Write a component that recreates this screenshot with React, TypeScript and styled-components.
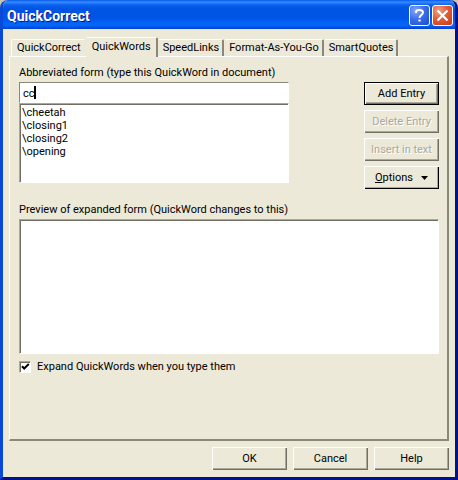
import React, { useState } from 'react';
import styled, { createGlobalStyle, css } from 'styled-components';

const face = '#ece9d8';
const shadow = '#8b887a';
const dark = '#716f64';

const GlobalStyle = createGlobalStyle`
  * { box-sizing: border-box; }
  body { margin: 0; background: #c9c4b0; }
  body, button, input, select, textarea {
    font-family: Roboto, "Liberation Sans", Arial, sans-serif;
    font-size: 11px;
    line-height: 13px;
    color: #000;
  }
`;

const Dialog = styled.div`
  display: flex;
  flex-direction: column;
  min-height: 100vh;
  background: ${face};
  border: solid;
  border-width: 0 3px 3px;
  border-color: #0a48d8 #00138c #00138c #0a48d8;
  border-radius: 8px 8px 0 0;
  overflow: hidden;
`;

const TitleBar = styled.header`
  display: flex;
  align-items: center;
  gap: 2px;
  height: 29px;
  margin-left: -3px;
  margin-right: -3px;
  padding: 2px 5px 0 7px;
  background: linear-gradient(#0058e6 0, #3a8bff 2px, #0860ee 5px, #0054e3 9px, #0055e5 18px, #0366fb 24px, #0262f2 26px, #003dd0 29px);
`;

const Title = styled.h1`
  flex: 1;
  margin: 0;
  font-family: Roboto, "Liberation Sans", sans-serif;
  font-size: 14px;
  line-height: 18px;
  font-weight: 700;
  color: #fff;
  text-shadow: 1px 1px 0 #0a1883;
`;

const CaptionButton = styled.button<{ $close?: boolean }>`
  display: flex;
  align-items: center;
  justify-content: center;
  width: 21px;
  height: 21px;
  padding: 0;
  border: 1px solid #fff;
  border-radius: 3px;
  background: ${(p) =>
    p.$close
      ? 'radial-gradient(circle at 30% 25%, #f0a083 0, #e25c38 45%, #c63a14 100%)'
      : 'radial-gradient(circle at 30% 25%, #88a8f5 0, #3c6ee8 45%, #1c4bd0 100%)'};
`;

const Body = styled.main`
  flex: 1;
  display: flex;
  flex-direction: column;
  padding: 7px 6px 7px;
`;

const TabList = styled.div`
  display: flex;
  align-items: flex-end;
  height: 20px;
  padding-left: 2px;
`;

const Tab = styled.button<{ $active: boolean }>`
  height: 17px;
  padding: 0 3px 1px 4px;
  border: solid;
  border-width: 1px 2px 0 1px;
  border-color: #fff ${shadow} #fff #fff;
  border-radius: 2px 2px 0 0;
  background: ${face};
  white-space: nowrap;
  &:first-child { border-right-color: ${face}; padding-left: 5px; }
  &:not(:first-child) { border-left-color: ${face}; }
  ${(p) =>
    p.$active &&
    css`
      z-index: 1;
      height: 20px;
      margin-bottom: -1px;
      padding: 0 5px 3px 5px;
    `}
`;

const Panel = styled.section`
  flex: 1;
  display: flex;
  flex-direction: column;
  padding: 9px 8px 8px 9px;
  border: solid;
  border-width: 1px 2px 2px 1px;
  border-color: #fff ${shadow} ${shadow} #fff;
`;

const FieldLabel = styled.label`
  height: 16px;
  white-space: nowrap;
`;

const EntryRow = styled.div`
  display: flex;
  justify-content: space-between;
  gap: 75px;
`;

const EntryColumn = styled.div`
  flex: 1;
  display: flex;
  flex-direction: column;
`;

const sunken = css`
  border: 1px solid #fff;
  border-top-color: #aca899;
  border-left-color: #aca899;
  border-radius: 0;
  background: #fff;
  box-shadow: inset 1px 1px ${dark};
  outline: none;
`;

const TextBox = styled.div`
  position: relative;
  display: flex;
`;

const EntryInput = styled.input`
  width: 100%;
  height: 21px;
  padding: 1px 3px 0;
  border: 1px solid #fff;
  border-top-color: ${shadow};
  border-left-color: ${shadow};
  outline: none;
`;

const Caret = styled.span`
  position: absolute;
  left: 15px;
  top: 4px;
  width: 2px;
  height: 13px;
  background: #000;
  pointer-events: none;
`;

const WordList = styled.select`
  ${sunken}
  height: 80px;
  padding: 2px 0;
  overflow: hidden;
  appearance: none;
  option {
    min-height: 13px;
    padding: 0 2px;
    line-height: 13px;
  }
`;

const ButtonColumn = styled.div`
  display: flex;
  flex-direction: column;
  gap: 5px;
  padding-top: 16px;
`;

const PushButton = styled.button<{ $default?: boolean; $heavy?: boolean }>`
  display: flex;
  align-items: center;
  justify-content: center;
  gap: 8px;
  width: 75px;
  height: 23px;
  padding: 0;
  border: 0;
  background: ${face};
  box-shadow: inset 1px 1px #fff, inset -1px -1px ${(p) => (p.$heavy ? '#000' : dark)},
    inset -2px -2px #aca899;
  ${(p) =>
    p.$default &&
    css`
      border: 1px solid #000;
      box-shadow: inset 1px 1px #fff, inset -1px -1px ${dark}, inset -2px -2px #aca899;
    `}
  &:disabled {
    color: #aca899;
    text-shadow: 1px 1px #fff;
  }
`;

const PreviewLabel = styled(FieldLabel)`
  margin-top: 14px;
`;

const Preview = styled.textarea`
  ${sunken}
  display: block;
  height: 135px;
  padding: 2px;
  resize: none;
`;

const CheckLabel = styled.label`
  display: flex;
  align-items: center;
  gap: 6px;
  margin-top: 6px;
`;

const CheckWrap = styled.span`
  position: relative;
  display: flex;
  input {
    ${sunken}
    appearance: none;
    width: 12px;
    height: 12px;
    margin: 0;
  }
  svg {
    position: absolute;
    inset: 0;
    pointer-events: none;
  }
`;

const Footer = styled.footer`
  display: flex;
  justify-content: flex-end;
  gap: 6px;
  padding-top: 6px;
`;

const tabs = ['QuickCorrect', 'QuickWords', 'SpeedLinks', 'Format-As-You-Go', 'SmartQuotes'];
const words = ['\\cheetah', '\\closing1', '\\closing2', '\\opening'];

export default function App() {
  const [active, setActive] = useState('QuickWords');
  const [entry, setEntry] = useState('cc');
  const [expand, setExpand] = useState(true);

  return (
    <>
      <GlobalStyle />
      <Dialog role="dialog" aria-labelledby="title">
        <TitleBar>
          <Title id="title">QuickCorrect</Title>
          <CaptionButton aria-label="Context help">
            <svg width="13" height="15" viewBox="0 0 13 15" fill="none" stroke="#fff" strokeWidth="2">
              <path d="M3 5V4.2C3 2.8 4.2 2 6.3 2S10 3 10 4.6c0 2.2-3.5 2.5-3.5 5.4" />
              <path d="M5.4 12.6h2.2" />
            </svg>
          </CaptionButton>
          <CaptionButton $close aria-label="Close">
            <svg width="13" height="13" viewBox="0 0 13 13" stroke="#fff" strokeWidth="2.2">
              <path d="M1.5 1.5l10 10M11.5 1.5l-10 10" />
            </svg>
          </CaptionButton>
        </TitleBar>
        <Body>
          <TabList role="tablist">
            {tabs.map((name) => (
              <Tab
                key={name}
                role="tab"
                aria-selected={name === active}
                $active={name === active}
                onClick={() => setActive(name)}
              >
                {name}
              </Tab>
            ))}
          </TabList>
          <Panel role="tabpanel">
            <EntryRow>
              <EntryColumn>
                <FieldLabel htmlFor="entry">Abbreviated form (type this QuickWord in document)</FieldLabel>
                <TextBox>
                  <EntryInput id="entry" value={entry} onChange={(e) => setEntry(e.target.value)} />
                  {entry === 'cc' && <Caret />}
                </TextBox>
                <WordList size={5} aria-label="QuickWords">
                  {words.map((w) => (
                    <option key={w}>{w}</option>
                  ))}
                </WordList>
              </EntryColumn>
              <ButtonColumn>
                <PushButton $default>Add Entry</PushButton>
                <PushButton disabled>Delete Entry</PushButton>
                <PushButton disabled>Insert in text</PushButton>
                <PushButton $heavy>
                  <span>
                    <u>O</u>ptions
                  </span>
                  <svg width="7" height="4" viewBox="0 0 7 4">
                    <path d="M0 0h7L3.5 4z" />
                  </svg>
                </PushButton>
              </ButtonColumn>
            </EntryRow>
            <PreviewLabel htmlFor="preview">Preview of expanded form (QuickWord changes to this)</PreviewLabel>
            <Preview id="preview" />
            <CheckLabel>
              <CheckWrap>
                <input type="checkbox" checked={expand} onChange={(e) => setExpand(e.target.checked)} />
                {expand && (
                  <svg width="12" height="12" viewBox="0 0 12 12" fill="none" stroke="#000" strokeWidth="2">
                    <path d="M3 5.2l2.2 2.3L9.8 3" />
                  </svg>
                )}
              </CheckWrap>
              Expand QuickWords when you type them
            </CheckLabel>
          </Panel>
          <Footer>
            <PushButton>OK</PushButton>
            <PushButton>Cancel</PushButton>
            <PushButton>Help</PushButton>
          </Footer>
        </Body>
      </Dialog>
    </>
  );
}
